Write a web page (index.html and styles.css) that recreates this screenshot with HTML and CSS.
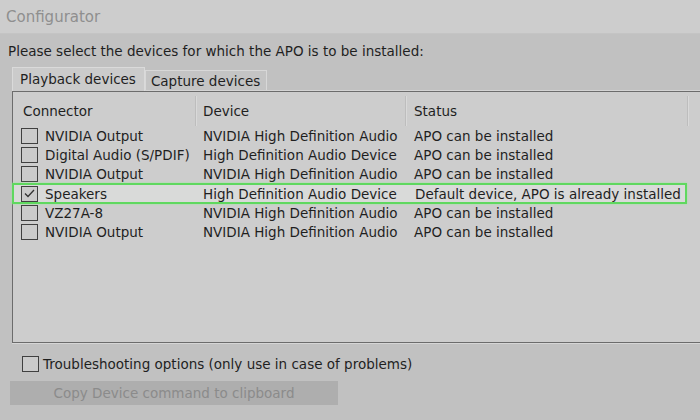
FILE: index.html
```html
<!DOCTYPE html>
<html>
<head>
<meta charset="utf-8">
<link rel="stylesheet" href="styles.css">
</head>
<body>
<div class="window">
  <div class="titlebar">Configurator</div>
  <div class="client">
    <div class="prompt">Please select the devices for which the APO is to be installed:</div>
    <div class="tabs">
      <div class="tab active">Playback devices</div>
      <div class="tab">Capture devices</div>
    </div>
    <div class="listview">
      <div class="row header">
        <div class="cell c1">Connector</div>
        <div class="cell c2">Device</div>
        <div class="cell c3">Status</div>
      </div>
      <div class="row"><div class="cell c1"><span class="cb"></span>NVIDIA Output</div><div class="cell c2">NVIDIA High Definition Audio</div><div class="cell c3">APO can be installed</div></div>
      <div class="row"><div class="cell c1"><span class="cb"></span>Digital Audio (S/PDIF)</div><div class="cell c2">High Definition Audio Device</div><div class="cell c3">APO can be installed</div></div>
      <div class="row"><div class="cell c1"><span class="cb"></span>NVIDIA Output</div><div class="cell c2">NVIDIA High Definition Audio</div><div class="cell c3">APO can be installed</div></div>
      <div class="row selected"><div class="cell c1"><span class="cb checked"><svg width="13" height="13" viewBox="0 0 13 13"><path d="M2 6.5 L5 9.5 L11 3" fill="none" stroke="#333" stroke-width="1.3"/></svg></span>Speakers</div><div class="cell c2">High Definition Audio Device</div><div class="cell c3">Default device, APO is already installed</div></div>
      <div class="row"><div class="cell c1"><span class="cb"></span>VZ27A-8</div><div class="cell c2">NVIDIA High Definition Audio</div><div class="cell c3">APO can be installed</div></div>
      <div class="row"><div class="cell c1"><span class="cb"></span>NVIDIA Output</div><div class="cell c2">NVIDIA High Definition Audio</div><div class="cell c3">APO can be installed</div></div>
    </div>
    <div class="trouble"><span class="cb"></span>Troubleshooting options (only use in case of problems)</div>
    <div class="button">Copy Device command to clipboard</div>
  </div>
</div>
</body>
</html>
```
FILE: styles.css
```css
html, body {
  margin: 0;
  padding: 0;
}
body {
  width: 700px;
  height: 420px;
  overflow: hidden;
  background: #c1c1c1;
  font-family: "DejaVu Sans", Verdana, sans-serif;
  font-size: 13.5px;
  color: #1f1f1f;
}
.window {
  width: 700px;
  height: 420px;
  display: flex;
  flex-direction: column;
}
.titlebar {
  height: 34px;
  line-height: 34px;
  background: #cdcdcd;
  color: #8f8f8f;
  padding-left: 6px;
  font-size: 15px;
  border-bottom: 1px solid #c4c4c4;
  box-sizing: border-box;
}
.client {
  display: flex;
  flex-direction: column;
  padding-top: 8px;
}
.prompt {
  padding-left: 8px;
  height: 18px;
  line-height: 18px;
}
.tabs {
  display: flex;
  align-items: flex-end;
  height: 24px;
  padding-left: 12px;
  margin-top: 7px;
}
.tab {
  height: 20px;
  line-height: 20px;
  padding: 0 6px 0 5px;
  background: #c4c4c4;
  border: 1px solid #d8d8d8;
  border-bottom: none;
  box-sizing: content-box;
}
.tab.active {
  height: 23px;
  line-height: 22px;
  padding: 0 8px 0 7px;
  background: #cbcbcb;
  border-color: #dadada;
  position: relative;
  z-index: 1;
}
.listview {
  margin-left: 12px;
  width: 700px;
  height: 246px;
  background: #cdcdcd;
  border-top: 1px solid #6c6c6c;
  border-left: 1px solid #6c6c6c;
  border-bottom: 1px solid #6c6c6c;
  box-shadow: 0 1px 0 #d6d6d6, 0 -1px 0 #d4d4d4;
  display: flex;
  flex-direction: column;
  padding-top: 4px;
  box-sizing: content-box;
}
.row {
  display: grid;
  grid-template-columns: 183px 210px 282px;
  grid-template-rows: 100%;
  align-items: center;
  height: 19.3px;
  line-height: 16px;
  white-space: nowrap;
  box-sizing: border-box;
  flex: none;
}
.row.header {
  height: 30px;
  align-items: stretch;
}
.header .cell {
  border-right: 1px solid #bdbdbd;
  box-shadow: 1px 0 0 #d9d9d9;
}
.cell {
  display: flex;
  align-items: center;
  overflow: visible;
}
.c1 { padding-left: 8px; }
.c2 { padding-left: 7px; }
.c3 { padding-left: 8px; }
.header .c1 { padding-left: 10px; }
.header .c2 { padding-left: 7px; }
.header .c3 { padding-left: 8px; }
.cb {
  width: 15px;
  height: 14px;
  border: 1px solid #404040;
  background: #cbcbcb;
  margin-right: 7px;
  flex: none;
  display: inline-flex;
  align-items: center;
  justify-content: center;
}
.row.selected {
  width: 675px;
  height: 20.5px;
  border: 2px solid #5fd85f;
  box-shadow: 0 0 2px #9be89b;
  background: #d9dad9;
  margin-left: -1px;
  margin-top: -0.6px;
  margin-bottom: -0.6px;
}
.row.selected .c1 { padding-left: 7px; }
.row.selected .c2 { padding-left: 6px; }
.trouble {
  display: flex;
  align-items: center;
  margin-top: 12px;
  padding-left: 22px;
  height: 18px;
}
.trouble .cb {
  margin-right: 4px;
}
.button {
  margin: 8px 0 0 10px;
  width: 328px;
  height: 24px;
  line-height: 24px;
  background: #aeaeae;
  color: #8b8b8b;
  text-align: center;
}
```
